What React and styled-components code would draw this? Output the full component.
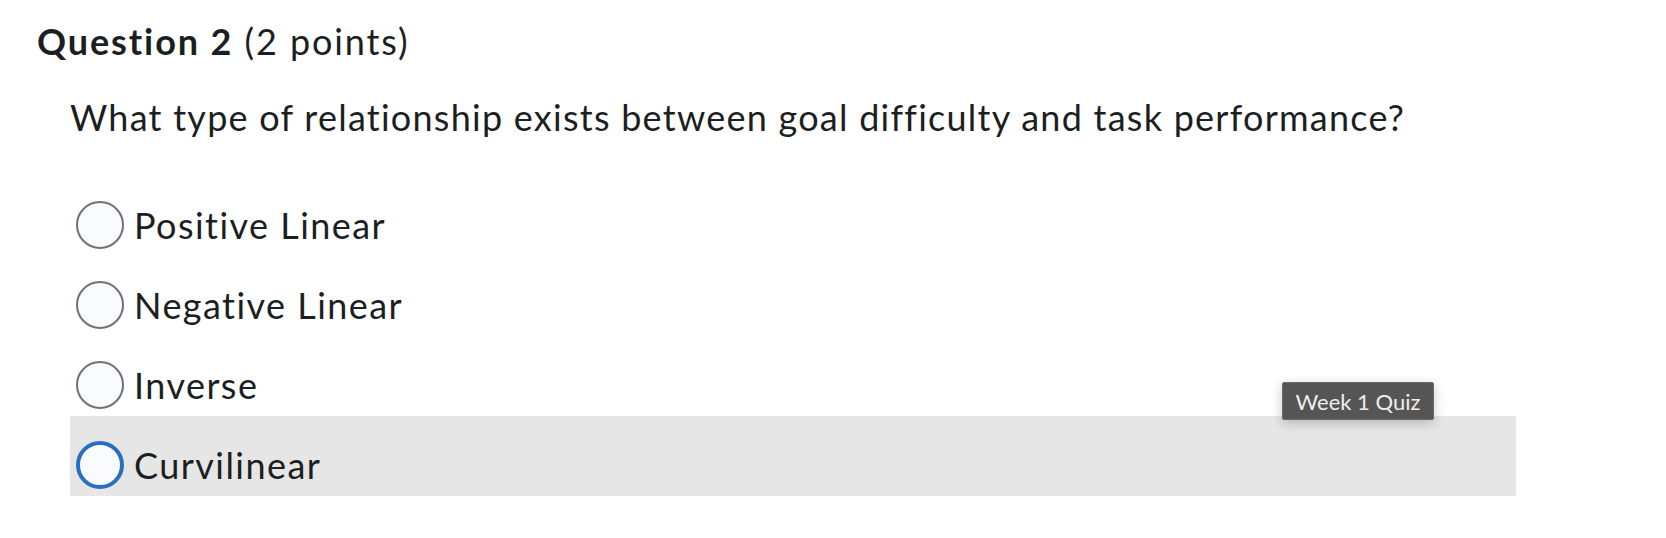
import styled, { createGlobalStyle } from 'styled-components';

const GlobalStyle = createGlobalStyle`
  html, body {
    margin: 0;
    padding: 0;
    background: #ffffff;
  }
  body {
    font-family: Lato, 'Noto Sans', sans-serif;
    font-variant-ligatures: none;
    color: #1c1f22;
  }
`;

const options = [
  { id: 'a', label: 'Positive Linear' },
  { id: 'b', label: 'Negative Linear' },
  { id: 'c', label: 'Inverse' },
  { id: 'd', label: 'Curvilinear', hovered: true },
];

const App = () => {
  return (
    <>
      <GlobalStyle />
      <Page>
        <Title>
          <strong>Question 2</strong> (2 points)
        </Title>
        <Prompt>
          What type of relationship exists between goal difficulty and task
          performance?
        </Prompt>
        <OptionList>
          {options.map((opt) => (
            <Option key={opt.id} $hovered={opt.hovered}>
              <Radio $focused={opt.hovered} />
              <Label>{opt.label}</Label>
            </Option>
          ))}
        </OptionList>
        <Tooltip>Week 1 Quiz</Tooltip>
      </Page>
    </>
  );
};

const Page = styled.main`
  position: relative;
  width: 1666px;
  height: 538px;
  padding: 20px 0 0 37px;
  box-sizing: border-box;
`;

const Title = styled.h2`
  margin: 0;
  font-size: 36px;
  line-height: 1.2;
  font-weight: 400;
  letter-spacing: 1.9px;
  color: #1c1f22;

  strong {
    font-weight: 700;
  }
`;

const Prompt = styled.p`
  margin: 33px 0 0 33px;
  font-size: 36px;
  line-height: 1.2;
  letter-spacing: 1.25px;
  color: #1c1f22;
`;

const OptionList = styled.ul`
  list-style: none;
  margin: 37px 0 0 33px;
  padding: 0;
  width: 1446px;
`;

const Option = styled.li`
  display: flex;
  align-items: flex-start;
  gap: 10px;
  height: 80px;
  box-sizing: border-box;
  padding: 25px 0 0 6px;
  background: ${(p) => (p.$hovered ? '#e6e6e6' : 'transparent')};
`;

const Radio = styled.span`
  flex: none;
  width: 48px;
  height: 48px;
  border-radius: 50%;
  box-sizing: border-box;
  background: #f9fbff;
  border: ${(p) => (p.$focused ? '4px solid #2a6ebf' : '2px solid #6d7175')};
`;

const Label = styled.span`
  font-size: 36px;
  line-height: 48px;
  letter-spacing: 1.45px;
  color: #1c1f22;
`;

const Tooltip = styled.div`
  position: absolute;
  left: 1282px;
  top: 382px;
  width: 152px;
  height: 38px;
  box-sizing: border-box;
  display: flex;
  align-items: center;
  justify-content: center;
  background: #555555;
  border: 1px solid #6c6c6c;
  border-radius: 2px;
  color: #eeeeee;
  font-size: 22px;
  box-shadow: 0 3px 12px rgba(0, 0, 0, 0.22);
`;

export default App;
